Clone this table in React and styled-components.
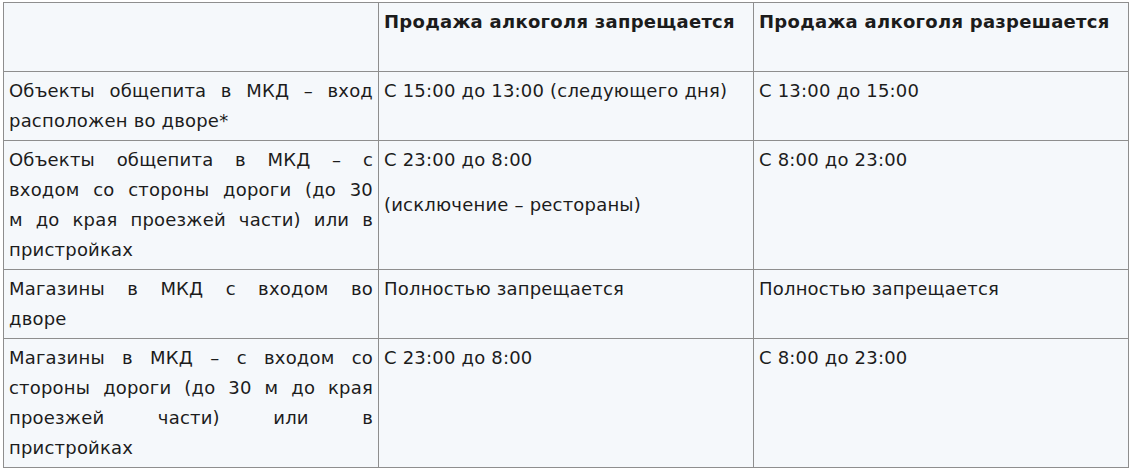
import React from "react";
import styled, { createGlobalStyle } from "styled-components";

const GlobalStyle = createGlobalStyle`
  html, body { margin: 0; padding: 0; background: #ffffff; }
  body { font-family: "DejaVu Sans", "Noto Sans", sans-serif; }
`;

const Wrapper = styled.div`
  padding: 2px 0 0 3px;
`;

const Table = styled.table`
  border-collapse: collapse;
  table-layout: fixed;
  width: 1125px;
  background: #f5f8fb;
  color: #1c1c1c;
  font-family: "DejaVu Sans", "Noto Sans", sans-serif;
  font-size: 18px;
  line-height: 30px;
  letter-spacing: 0.2px;
`;

const Col = styled.col`
  width: 375px;
`;

const HeadCell = styled.th`
  border: 1px solid #8e8e8e;
  padding: 4px 5px 34px;
  text-align: left;
  vertical-align: top;
  font-weight: 700;
  letter-spacing: 0.28px;
`;

const Cell = styled.td`
  border: 1px solid #8e8e8e;
  padding: 4px 5px 4px;
  text-align: left;
  vertical-align: top;
  font-weight: 400;
`;

const Line = styled.span`
  display: block;
  text-align: ${(p) => (p.$last ? "left" : "justify")};
  text-align-last: ${(p) => (p.$last ? "left" : "justify")};
  white-space: nowrap;
`;

const Para = styled.p`
  margin: 0 0 15px;
  &:last-child { margin-bottom: 0; }
`;

const Justified = ({ lines }) =>
  lines.map((l, i) => (
    <Line key={i} $last={i === lines.length - 1}>
      {l}
    </Line>
  ));

const rows = [
  {
    first: ["Объекты общепита в МКД – вход", "расположен во дворе*"],
    ban: ["С 15:00 до 13:00 (следующего дня)"],
    allow: ["С 13:00 до 15:00"],
  },
  {
    first: [
      "Объекты общепита в МКД – с",
      "входом со стороны дороги (до 30",
      "м до края проезжей части) или в",
      "пристройках",
    ],
    ban: ["С 23:00 до 8:00", "(исключение – рестораны)"],
    allow: ["С 8:00 до 23:00"],
  },
  {
    first: ["Магазины в МКД с входом во", "дворе"],
    ban: ["Полностью запрещается"],
    allow: ["Полностью запрещается"],
  },
  {
    first: [
      "Магазины в МКД – с входом со",
      "стороны дороги (до 30 м до края",
      "проезжей части) или в",
      "пристройках",
    ],
    ban: ["С 23:00 до 8:00"],
    allow: ["С 8:00 до 23:00"],
  },
];

export default function App() {
  return (
    <>
      <GlobalStyle />
      <Wrapper>
        <Table>
          <colgroup>
            <Col />
            <Col />
            <Col />
          </colgroup>
          <thead>
            <tr>
              <HeadCell />
              <HeadCell>Продажа алкоголя запрещается</HeadCell>
              <HeadCell>Продажа алкоголя разрешается</HeadCell>
            </tr>
          </thead>
          <tbody>
            {rows.map((r, i) => (
              <tr key={i}>
                <Cell>
                  <Justified lines={r.first} />
                </Cell>
                <Cell>
                  {r.ban.map((p, j) => (
                    <Para key={j}>{p}</Para>
                  ))}
                </Cell>
                <Cell>
                  {r.allow.map((p, j) => (
                    <Para key={j}>{p}</Para>
                  ))}
                </Cell>
              </tr>
            ))}
          </tbody>
        </Table>
      </Wrapper>
    </>
  );
}
